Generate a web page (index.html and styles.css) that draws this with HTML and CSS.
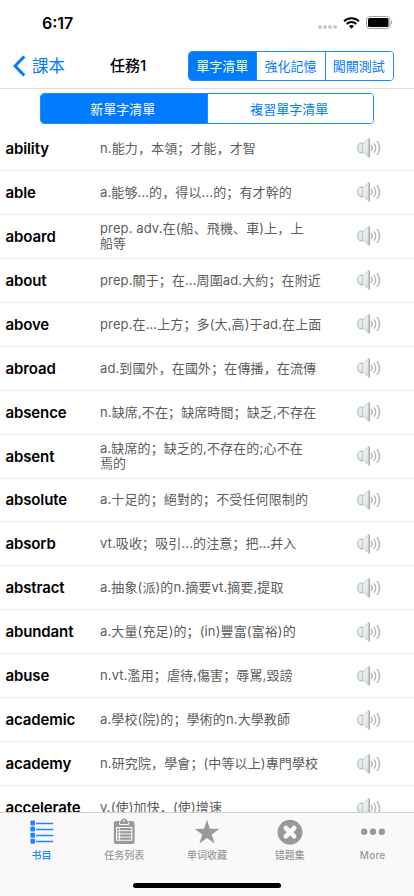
FILE: index.html
```html
<!DOCTYPE html>
<html lang="zh">
<head>
    <meta charset="UTF-8">
    <meta name="viewport" content="width=device-width, initial-scale=1.0">
    <title>任務1</title>
    <link rel="stylesheet" href="styles.css">
</head>
<body>
    <svg class="defs" width="0" height="0">
        <defs>
            <linearGradient id="metal" x1="0" y1="0" x2="1" y2="1">
                <stop offset="0" stop-color="#f6faf7"/>
                <stop offset="0.6" stop-color="#e2ebe5"/>
                <stop offset="1" stop-color="#c8d2cb"/>
            </linearGradient>
            <symbol id="speaker" viewBox="0 0 28 24">
                <path d="M8 7.200H5.800C3.700 7.200 2.800 9.200 2.800 12s.9 4.800 3 4.800H8z" fill="url(#metal)" stroke="#a9ada9" stroke-width="1"/>
                <path d="M7.800 7.700L13.800 2.500v18.600L7.800 16.300z" fill="url(#metal)" stroke="#c0c5c1" stroke-width=".7"/>
                <path d="M14.300 2.400v19" stroke="#a4a8a5" stroke-width="1.200"/>
                <path d="M15.600 9.200c2.300.9 2.300 4.600 0 5.600M18.600 7.200c2.700 2.300 2.700 7.300 0 9.600M21.800 5.200c3.700 3.400 3.700 10.200 0 13.600" fill="none" stroke="#b5b9b6" stroke-width="1.400"/>
            </symbol>
        </defs>
    </svg>

    <div class="status-bar">
        <span class="time">6:17</span>
        <div class="status-icons">
            <div class="signal"><i></i><i></i><i></i><i></i></div>
            <svg class="wifi" width="17" height="12" viewBox="0 0 17 12">
                <path d="M1.1 4.3a10.6 10.6 0 0 1 14.8 0M3.7 7a6.9 6.9 0 0 1 9.6 0" fill="none" stroke="#000" stroke-width="2"/>
                <path d="M8.5 11.7L5.9 9.1a3.8 3.8 0 0 1 5.2 0z"/>
            </svg>
            <svg class="battery" width="27" height="13" viewBox="0 0 27 13">
                <rect x=".5" y=".5" width="23.5" height="12" rx="3.4" fill="none" stroke="#a0a0a0"/>
                <rect x="2" y="2" width="20.5" height="9" rx="1.6"/>
                <path d="M25.2 4.5c1.4.5 1.4 3.5 0 4z" fill="#999"/>
            </svg>
        </div>
    </div>

    <div class="nav-bar">
        <a class="back" href="#">
            <svg width="13" height="22" viewBox="0 0 13 22"><path d="M11.3 1.5L2 11l9.3 9.5" fill="none" stroke="#007aff" stroke-width="3"/></svg>
            <span>課本</span>
        </a>
        <h1 class="title">任務1</h1>
        <div class="segment nav-segment">
            <button class="selected">單字清單</button>
            <button>強化記憶</button>
            <button>闖關測試</button>
        </div>
    </div>

    <div class="content">
        <div class="segment list-segment">
            <button class="selected">新單字清單</button>
            <button>複習單字清單</button>
        </div>
        <ul class="words">
            <li><b>ability</b><p>n.能力，本領；才能，才智</p><svg class="speaker"><use href="#speaker"/></svg></li>
            <li><b>able</b><p>a.能够...的，得以...的；有才幹的</p><svg class="speaker"><use href="#speaker"/></svg></li>
            <li><b>aboard</b><p>prep. adv.在(船、飛機、車)上，上<br>船等</p><svg class="speaker"><use href="#speaker"/></svg></li>
            <li><b>about</b><p>prep.關于；在...周圍ad.大約；在附近</p><svg class="speaker"><use href="#speaker"/></svg></li>
            <li><b>above</b><p>prep.在...上方；多(大,高)于ad.在上面</p><svg class="speaker"><use href="#speaker"/></svg></li>
            <li><b>abroad</b><p>ad.到國外，在國外；在傳播，在流傳</p><svg class="speaker"><use href="#speaker"/></svg></li>
            <li><b>absence</b><p>n.缺席,不在；缺席時間；缺乏,不存在</p><svg class="speaker"><use href="#speaker"/></svg></li>
            <li><b>absent</b><p>a.缺席的；缺乏的,不存在的;心不在<br>焉的</p><svg class="speaker"><use href="#speaker"/></svg></li>
            <li><b>absolute</b><p>a.十足的；絕對的；不受任何限制的</p><svg class="speaker"><use href="#speaker"/></svg></li>
            <li><b>absorb</b><p>vt.吸收；吸引...的注意；把...幷入</p><svg class="speaker"><use href="#speaker"/></svg></li>
            <li><b>abstract</b><p>a.抽象(派)的n.摘要vt.摘要,提取</p><svg class="speaker"><use href="#speaker"/></svg></li>
            <li><b>abundant</b><p>a.大量(充足)的；(in)豐富(富裕)的</p><svg class="speaker"><use href="#speaker"/></svg></li>
            <li><b>abuse</b><p>n.vt.濫用；虐待,傷害；辱駡,毀謗</p><svg class="speaker"><use href="#speaker"/></svg></li>
            <li><b>academic</b><p>a.學校(院)的；學術的n.大學教師</p><svg class="speaker"><use href="#speaker"/></svg></li>
            <li><b>academy</b><p>n.研究院，學會；(中等以上)專門學校</p><svg class="speaker"><use href="#speaker"/></svg></li>
            <li><b>accelerate</b><p>v.(使)加快，(使)增速</p><svg class="speaker"><use href="#speaker"/></svg></li>
        </ul>
    </div>

    <div class="tab-bar">
        <div class="tabs">
            <a class="tab active" href="#">
                <svg width="28" height="28" viewBox="0 0 28 28" fill="currentColor">
                    <rect x="3.4" y="2.600" width="4.600" height="5" rx="1"/><rect x="3.400" y="8.600" width="4.600" height="5" rx="1"/><rect x="3.400" y="14.700" width="4.600" height="5" rx="1"/><rect x="3.400" y="20.800" width="4.600" height="5" rx="1"/>
                    <path d="M9 5.500h17.200M9 11.500h17.200M9 17.500h17.200M9 23.500h17.200" stroke="currentColor" stroke-width="1.400"/>
                </svg>
                <span>书目</span>
            </a>
            <a class="tab" href="#">
                <svg width="28" height="28" viewBox="0 0 28 28">
                    <path d="M6.600 3h3.600c.8 0 1.100-.4 1.300-1 .8-2 4.600-2 5.400 0 .2.600.5 1 1.300 1h3.600a2.800 2.800 0 0 1 2.800 2.800v17.400a2.800 2.800 0 0 1-2.800 2.800H6.600a2.800 2.800 0 0 1-2.800-2.800V5.800A2.800 2.800 0 0 1 6.600 3z" fill="currentColor"/>
                    <path d="M9.600 3.800v2.700h9.200V3.800" fill="none" stroke="#f9f9f9" stroke-width="1"/>
                    <path d="M6.600 9.500h15.200v12.800H6.600z" fill="none" stroke="#f9f9f9" stroke-width="1.100"/>
                    <path d="M9.600 9.500v12.800M6.600 12.700h15.200M6.600 15.900h15.200M6.600 19.100h15.200" stroke="#f9f9f9" stroke-width="1"/>
                    <circle cx="14.200" cy="2.700" r=".9" fill="#f9f9f9"/>
                </svg>
                <span>任务列表</span>
            </a>
            <a class="tab" href="#">
                <svg width="28" height="28" viewBox="0 0 28 28" fill="currentColor"><path d="M14 1.800l2.900 9 9.400.1-7.600 5.500 2.900 9.100-7.600-5.600-7.600 5.600 2.900-9.100-7.600-5.500 9.400-.1z"/></svg>
                <span>单词收藏</span>
            </a>
            <a class="tab" href="#">
                <svg width="28" height="28" viewBox="0 0 28 28"><circle cx="14" cy="14.200" r="12.400" fill="currentColor"/><path d="M9.800 10l8.400 8.400M18.200 10l-8.400 8.400" stroke="#f9f9f9" stroke-width="4.600" stroke-linecap="round"/></svg>
                <span>错题集</span>
            </a>
            <a class="tab" href="#">
                <svg width="28" height="28" viewBox="0 0 28 28" fill="currentColor"><circle cx="5.200" cy="13.800" r="3.200"/><circle cx="14" cy="13.800" r="3.200"/><circle cx="22.800" cy="13.800" r="3.200"/></svg>
                <span class="latin">More</span>
            </a>
        </div>
        <div class="home-indicator"></div>
    </div>
</body>
</html>
```
FILE: styles.css
```css
* {
    box-sizing: border-box;
}
body {
    margin: 0;
    height: 100vh;
    display: flex;
    flex-direction: column;
    overflow: hidden;
    background: #fff;
    font-family: Inter, "Noto Sans CJK SC", sans-serif;
}
a {
    text-decoration: none;
}
.defs {
    position: absolute;
}
.status-bar {
    flex: none;
    height: 44px;
    display: flex;
    justify-content: space-between;
    padding: 13px 21px 0 42px;
}
.time {
    font-size: 16px;
    font-weight: 600;
    line-height: 20px;
}
.status-icons {
    display: flex;
    height: 19px;
    align-items: center;
}
.signal {
    display: flex;
    gap: 1px;
    margin: 9px 6px 0 0;
}
.signal i {
    width: 4px;
    height: 4px;
    border-radius: 50%;
    background: #c8c8c8;
}
.wifi {
    margin-right: 6px;
}
.nav-bar {
    flex: none;
    height: 45px;
    display: flex;
    align-items: center;
    padding: 0 20px 0 13px;
    border-bottom: 1px solid #dcdcdc;
}
.back {
    display: flex;
    align-items: center;
    gap: 6px;
    width: 97px;
    color: #007aff;
    font-size: 16.5px;
    line-height: 22px;
}
.title {
    margin: 0;
    width: 78px;
    font-size: 15px;
    font-weight: 500;
    line-height: 22px;
}
.segment {
    display: flex;
    border: 1px solid #1d89ff;
    border-radius: 4px;
    overflow: hidden;
}
.segment button {
    flex: 1;
    padding: 0 1px 0 0;
    border: 0;
    background: #fff;
    color: #007aff;
    font-family: inherit;
    font-size: 13px;
    line-height: 20px;
}
.segment button + button {
    border-left: 1px solid #1d89ff;
}
.segment .selected {
    background: #007aff;
    color: #fff;
}
.nav-segment {
    width: 206px;
    height: 30px;
}
.content {
    flex: 1;
    min-height: 0;
    overflow: hidden;
}
.list-segment {
    width: 334px;
    height: 31px;
    margin: 4px 0 3px 40px;
}
.list-segment button {
    padding-right: 2px;
}
.words {
    list-style: none;
    margin: 0;
    padding: 0;
}
.words li {
    display: flex;
    align-items: center;
    height: 43.94px;
    padding-left: 5.5px;
    border-bottom: 1px solid #ebebeb;
}
.words b {
    width: 94.5px;
    font-size: 15px;
    font-weight: 600;
    letter-spacing: -0.12px;
}
.words p {
    width: 255px;
    margin: 0;
    color: #5c5c5c;
    font-size: 13px;
    letter-spacing: 0.12px;
    line-height: 15px;
    white-space: nowrap;
}
.speaker {
    width: 28px;
    height: 24px;
}
.tab-bar {
    flex: none;
    height: 84px;
    background: #f9f9f9;
    border-top: 1px solid #d0d0d0;
}
.tabs {
    display: flex;
    height: 70px;
}
.tab {
    flex: 1;
    display: flex;
    flex-direction: column;
    align-items: center;
    padding-top: 5px;
    color: #999;
    font-size: 10px;
    font-weight: 500;
    line-height: 16px;
}
.tab span {
    margin-top: 1px;
}
.tab .latin {
    letter-spacing: 0.2px;
}
.tab.active {
    color: #1a87ff;
}
.home-indicator {
    width: 148px;
    height: 5px;
    margin: 0 auto;
    border-radius: 3px;
    background: #000;
}
```
